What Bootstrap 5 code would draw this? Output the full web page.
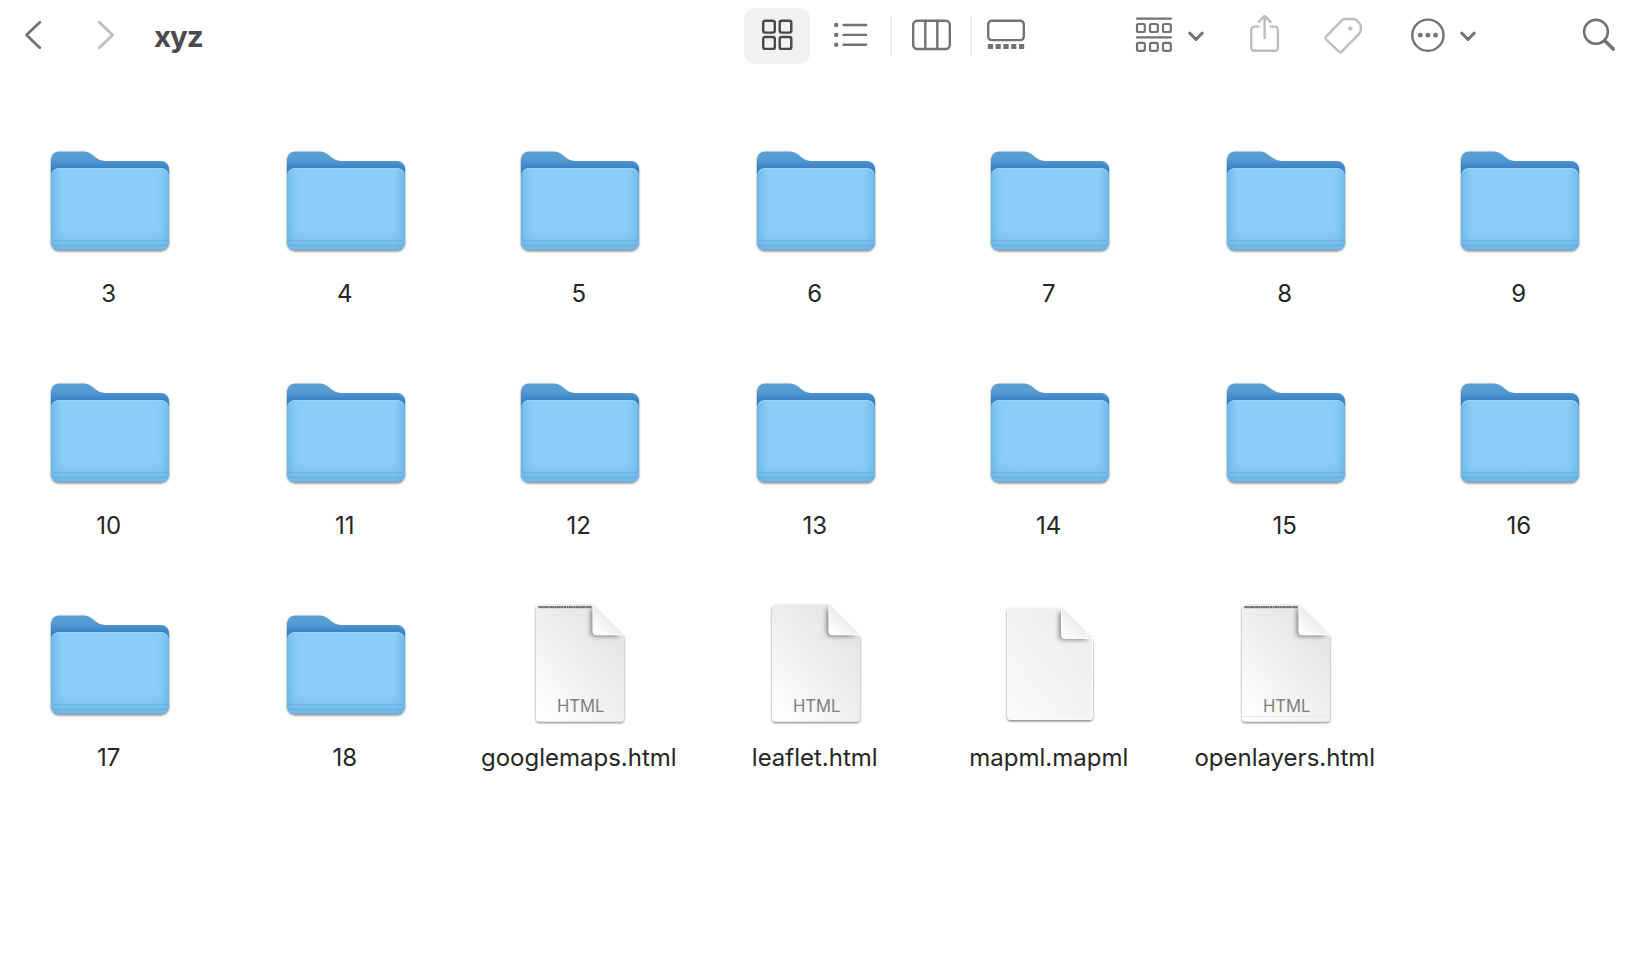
<!DOCTYPE html>
<html lang="en">
<head>
<meta charset="utf-8">
<title>xyz</title>
<link rel="stylesheet" href="https://cdn.jsdelivr.net/npm/bootstrap@5.3.0/dist/css/bootstrap.min.css">
<style>
body{font-family:Inter,"Liberation Sans",sans-serif;background:#fff;color:#262626;height:970px}
.toolbar{height:72px;color:#737373}
.toolbar svg{display:block;height:72px;fill:none;stroke:currentColor;stroke-width:2.4;stroke-linecap:round;stroke-linejoin:round}
.toolbar .btn{color:inherit;line-height:1}
.toolbar .faded{color:#bebebe}
.toolbar .picked{color:#484848}
.window-title{font-size:29.5px;font-weight:700;letter-spacing:-1px;width:590px;line-height:72px;color:#4a4a4a}
.dot-fill{fill:currentColor;stroke:none}
.files{display:grid;grid-template-columns:236px 234px 236px 234px 236px 234px 234px;grid-auto-rows:232px;margin:58px 0 0 -7px}
.file{width:234px}
.file svg{width:128px;height:140px;overflow:visible}
.file-name{font-size:24px;line-height:36px;margin-top:6px;padding-right:2.5px;letter-spacing:0}
.kind{font:16.600px Inter,sans-serif;letter-spacing:0;fill:#808080}
</style>
</head>
<body class="overflow-hidden">
<svg width="0" height="0" class="position-absolute" aria-hidden="true">
<defs>
<linearGradient id="back" x1="0" y1="0" x2="0" y2="1"><stop offset="0" stop-color="#5a9fd6"/><stop offset=".08" stop-color="#559bd2"/><stop offset=".17" stop-color="#3a80c6"/><stop offset="1" stop-color="#357fc3"/></linearGradient>
<linearGradient id="side" x1="0" y1="0" x2="1" y2="0"><stop offset="0" stop-color="#5fafe3" stop-opacity=".75"/><stop offset=".04" stop-color="#74bdec" stop-opacity=".6"/><stop offset=".12" stop-color="#8acdf7" stop-opacity="0"/><stop offset=".88" stop-color="#8acdf7" stop-opacity="0"/><stop offset=".96" stop-color="#74bdec" stop-opacity=".6"/><stop offset="1" stop-color="#5fafe3" stop-opacity=".75"/></linearGradient>
<linearGradient id="low" x1="0" y1="0" x2="0" y2="1"><stop offset="0" stop-color="#6fb9ea" stop-opacity="0"/><stop offset=".55" stop-color="#6fb9ea" stop-opacity=".35"/><stop offset="1" stop-color="#68b2e3" stop-opacity=".9"/></linearGradient>
<linearGradient id="paper" x1=".9" y1=".05" x2=".1" y2=".95"><stop offset="0" stop-color="#e2e2e2"/><stop offset=".45" stop-color="#ededed"/><stop offset="1" stop-color="#fefefe"/></linearGradient>
<linearGradient id="plain" x1=".9" y1=".05" x2=".1" y2=".95"><stop offset="0" stop-color="#ececec"/><stop offset="1" stop-color="#f9f9f9"/></linearGradient>
<linearGradient id="fold" x1=".1" y1=".9" x2=".55" y2=".4"><stop offset="0" stop-color="#fff"/><stop offset="1" stop-color="#e9e9e9"/></linearGradient>
<filter id="drop" x="-10%" y="-10%" width="120%" height="120%"><feDropShadow dx="0" dy="1.4" stdDeviation="1.2" flood-color="#000" flood-opacity=".5"/></filter>
<filter id="soft" x="-40%" y="-40%" width="180%" height="180%"><feGaussianBlur stdDeviation="2.8"/></filter>
<clipPath id="sheetClip"><path d="M23.500 10.500H76.500L108 42.500V124a3.500 3.500 0 0 1-3.500 3.500H23.500a3.500 3.500 0 0 1-3.500-3.500V14a3.500 3.500 0 0 1 3.500-3.500Z"/></clipPath>
<g id="folder">
<g filter="url(#drop)"><path fill="url(#back)" d="M13 21.500H38C47 21.500 49 30.900 59 30.900H115a8 8 0 0 1 8 8V112a8 8 0 0 1-8 8H13a8 8 0 0 1-8-8V29.500a8 8 0 0 1 8-8Z"/></g>
<rect x="5" y="38" width="118" height="82" rx="8" fill="#8acdf7"/>
<rect x="5" y="38" width="118" height="82" rx="8" fill="url(#side)"/>
<path d="M5 98H123V112a8 8 0 0 1-8 8H13a8 8 0 0 1-8-8Z" fill="url(#low)"/>
<path d="M5.500 110.300H122.500M6 115.300H122" stroke="#5dabe0" stroke-width="1" opacity=".8"/>
<path d="M7 42.500a7 6 0 0 1 6-4H115a7 6 0 0 1 6 4" fill="none" stroke="#98d4f9" stroke-width="1"/>
</g>
<g id="sheet">
<g filter="url(#drop)"><path fill="url(#paper)" d="M23.500 10.500H76.500L108 42V124a3.500 3.500 0 0 1-3.500 3.500H23.500a3.500 3.500 0 0 1-3.500-3.500V14a3.500 3.500 0 0 1 3.500-3.500Z"/></g>
<g clip-path="url(#sheetClip)"><path d="M75 16V39a3 3 0 0 0 3 3H104L77 14Z" fill="#000" opacity=".5" filter="url(#soft)"/></g>
<path d="M76.800 10.500V38a3 3 0 0 0 3 3H108Z" fill="url(#fold)"/>
<path d="M77 11.500V38a3 3 0 0 0 3 2.800H107" fill="none" stroke="#fff"/>
</g>
<g id="script-line"><path d="M22.500 13.200H76" stroke="#8c8c8c" stroke-width="2" stroke-dasharray="3 .5 1.500 .4 4 .6 2 .5"/><path d="M22.500 13H76" stroke="#3a3a3a" stroke-width="1" stroke-dasharray="1.200 .8 2 .7"/></g>
</defs>
</svg>

<nav class="toolbar d-flex align-items-start" aria-label="Toolbar">
  <button class="btn p-0 border-0" aria-label="Back"><svg width="70" viewBox="0 0 70 72"><path stroke-width="2.800" d="M39.800 22.300 26.500 35l13.300 12.700"/></svg></button>
  <button class="btn p-0 border-0 faded" aria-label="Forward"><svg width="84" viewBox="70 0 84 72"><path stroke-width="2.800" d="M99.300 22.300 112.600 35 99.300 47.700"/></svg></button>
  <h1 class="window-title m-0">xyz</h1>
  <button class="btn p-0 border-0 picked" aria-label="Icons"><svg width="66" viewBox="744 0 66 72"><rect x="744" y="8" width="66" height="56" rx="11" fill="#f1f1f1" stroke="none"/><rect x="763.200" y="20.700" width="11.600" height="11.900" rx="2"/><rect x="779.700" y="20.700" width="11.600" height="11.900" rx="2"/><rect x="763.200" y="37" width="11.600" height="11.900" rx="2"/><rect x="779.700" y="37" width="11.600" height="11.900" rx="2"/></svg></button>
  <button class="btn p-0 border-0" aria-label="List"><svg width="80" viewBox="810 0 80 72"><g class="dot-fill"><circle cx="836.200" cy="25" r="2.200"/><circle cx="836.200" cy="34.900" r="2.200"/><circle cx="836.200" cy="44.800" r="2.200"/></g><path d="M843.500 25h22.600M843.500 34.900h22.600M843.500 44.800h22.600"/></svg></button>
  <button class="btn p-0 border-0" aria-label="Columns"><svg width="80" viewBox="890 0 80 72"><path d="M891 16V56" stroke="#ededed" stroke-width="2" stroke-linecap="butt"/><rect x="913.200" y="20.800" width="36.600" height="28.200" rx="4"/><path d="M925.300 21V49M937.300 21V49"/></svg></button>
  <button class="btn p-0 border-0" aria-label="Gallery"><svg width="160" viewBox="970 0 160 72"><path d="M971 16V56" stroke="#ededed" stroke-width="2" stroke-linecap="butt"/><rect x="988.200" y="20.800" width="35.600" height="19.300" rx="3.500"/><path d="M987.800 46.500h36.400" stroke-width="5" stroke-linecap="butt" stroke-dasharray="5.200 2.600"/></svg></button>
  <button class="btn p-0 border-0" aria-label="Group"><svg width="110" viewBox="1130 0 110 72"><path d="M1137 18.700h34M1137 37.400h34" stroke-width="2.200"/><g stroke-width="2.200"><rect x="1137" y="24" width="7.800" height="8" rx="1.500"/><rect x="1150" y="24" width="7.800" height="8" rx="1.500"/><rect x="1163" y="24" width="7.800" height="8" rx="1.500"/><rect x="1137" y="42.800" width="7.800" height="8" rx="1.500"/><rect x="1150" y="42.800" width="7.800" height="8" rx="1.500"/><rect x="1163" y="42.800" width="7.800" height="8" rx="1.500"/></g><path stroke-width="3" d="M1189.700 33.200 1196 39.300l6.300-6.100"/></svg></button>
  <button class="btn p-0 border-0 faded" aria-label="Share"><svg width="75" viewBox="1240 0 75 72"><path d="M1258.500 26.600h-4a3.300 3.300 0 0 0-3.300 3.300v17.600a3.300 3.300 0 0 0 3.300 3.300h20.100a3.300 3.300 0 0 0 3.300-3.300v-17.600a3.300 3.300 0 0 0-3.300-3.300h-4M1264.600 38V16M1258.700 21.800l5.900-5.900 5.900 5.900"/></svg></button>
  <button class="btn p-0 border-0 faded" aria-label="Tags"><svg width="85" viewBox="1315 0 85 72"><path d="M1344.800 19h8.500q2 0 3.400 1.400l2.700 2.900q1.400 1.400 1.400 3.400v3.300q0 2-1.400 3.400l-17.400 18q-1.600 1.600-3.200 0L1326.300 39.600q-1.600-1.600 0-3.200l15.500-16q1.300-1.400 3-1.400Z"/><circle class="dot-fill" cx="1350.300" cy="28.600" r="2.200"/></svg></button>
  <button class="btn p-0 border-0" aria-label="More"><svg width="160" viewBox="1400 0 160 72"><circle cx="1427.900" cy="35.200" r="15.600"/><g class="dot-fill"><circle cx="1420.300" cy="35.200" r="2.400"/><circle cx="1427.900" cy="35.200" r="2.400"/><circle cx="1435.500" cy="35.200" r="2.400"/></g><path stroke-width="3" d="M1461.700 33.200 1468 39.300l6.300-6.100"/></svg></button>
  <button class="btn p-0 border-0" aria-label="Search"><svg width="66" viewBox="1560 0 66 72"><circle cx="1596" cy="31.800" r="11.900" stroke-width="2.600"/><path stroke-width="3.600" d="M1605.300 41.200l8 7.800"/></svg></button>
</nav>

<main class="files" id="files"></main>

<script src="https://cdn.jsdelivr.net/npm/bootstrap@5.3.0/dist/js/bootstrap.bundle.min.js"></script>
<script>
const label = '<text class="kind" x="64.600" y="118" text-anchor="middle">HTML</text>';
const art = {
  folder: '<use href="#folder"/>',
  code: '<use href="#sheet"/><use href="#script-line"/>' + label,
  codeFooter: '<use href="#sheet"/><use href="#script-line"/><path d="M20 122.500H108" stroke="#e8e8e8"/>' + label,
  html: '<use href="#sheet"/>' + label,
  blank: '<g filter="url(#drop)"><path fill="url(#plain)" stroke="#fafafa" d="M24.500 14H75L106.500 46V122.500a3 3 0 0 1-3 3H24.500a3 3 0 0 1-3-3V17a3 3 0 0 1 3-3Z"/></g><g transform="translate(-1.500 3.500)"><g clip-path="url(#sheetClip)"><path d="M75 16V39a3 3 0 0 0 3 3H104L77 14Z" opacity=".5" filter="url(#soft)"/></g><path d="M76.800 10.500V38a3 3 0 0 0 3 3H108Z" fill="url(#fold)"/><path d="M77 11.500V38a3 3 0 0 0 3 2.800H107" fill="none" stroke="#fff"/></g>'
};
const items = [];
for (let z = 3; z <= 18; z++) items.push([z, 'folder']);
items.push(['googlemaps.html', 'code'], ['leaflet.html', 'html'], ['mapml.mapml', 'blank'], ['openlayers.html', 'codeFooter']);
document.getElementById('files').innerHTML = items.map(([name, kind]) =>
  `<div class="file d-flex flex-column align-items-center"><svg viewBox="0 0 128 140">${art[kind]}</svg><div class="file-name text-nowrap">${name}</div></div>`).join('');
</script>
</body>
</html>
